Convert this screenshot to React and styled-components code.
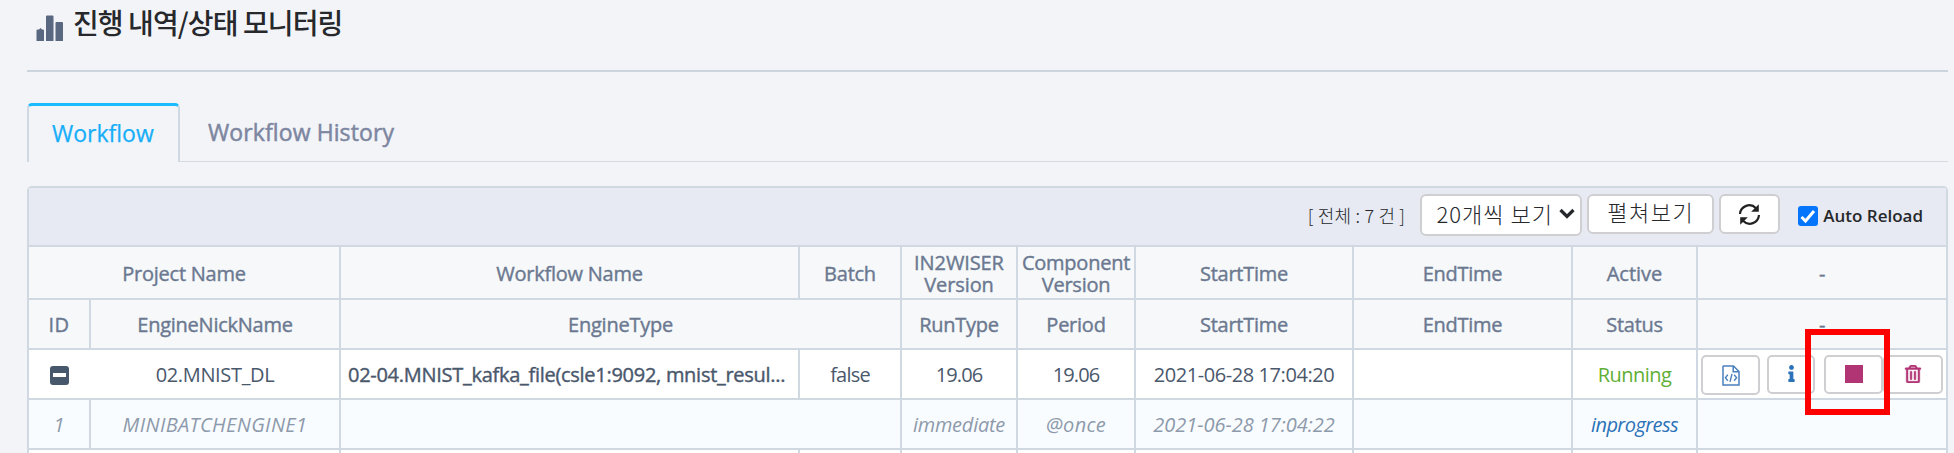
import React from "react";
import styled, { createGlobalStyle, css } from "styled-components";
import { FaInfo, FaRegTrashAlt } from "react-icons/fa";

const LINE = "#d0d8e1";

const GlobalStyle = createGlobalStyle`
  * { box-sizing: border-box; }
  body {
    margin: 0;
    background: #f2f4f8;
    font-family: "Open Sans", "Noto Sans CJK KR", sans-serif;
    overflow: hidden;
  }
`;

const Page = styled.main`
  width: 1954px;
  height: 453px;
  padding: 0 6px 0 27px;
  overflow: hidden;
`;

const PageHeader = styled.header`
  display: flex;
  align-items: flex-start;
  height: 72px;
  padding-left: 9px;
  border-bottom: 2px solid #ccd5de;
`;

const ChartIcon = styled.svg`
  width: 28px;
  height: 27px;
  margin-top: 14px;
  fill: #5a6780;
`;

const Title = styled.h1`
  margin: 2px 0 0 9px;
  font-size: 28px;
  font-weight: 500;
  line-height: 40px;
  letter-spacing: -0.9px;
  color: #26282c;
  font-family: "Noto Sans CJK KR", sans-serif;
  white-space: nowrap;
`;

const Tabs = styled.nav`
  display: flex;
  height: 60px;
  margin-top: 30px;
  padding-top: 1px;
  box-shadow: inset 0 -1px 0 #d6dbe1;
`;

const Tab = styled.a`
  height: 59px;
  padding: 0 24px 0 28px;
  font-size: 23px;
  line-height: 59px;
  font-weight: 500;
  white-space: nowrap;
  color: #7d86a0;
  letter-spacing: 0.1px;
  -webkit-text-stroke: 0.5px currentColor;
  ${(p) =>
    p.$active &&
    css`
      width: 153px;
      padding: 0 0 0 23px;
      border: 1px solid ${LINE};
      border-width: 3px 2px 0 2px;
      border-top-color: #1cbbff;
      border-radius: 5px 5px 0 0;
      background: #f2f4f8;
      color: #17aef8;
      letter-spacing: 0;
      line-height: 55px;
      -webkit-text-stroke: 0.25px currentColor;
    `}
`;

const Panel = styled.section`
  width: 1921px;
  height: 300px;
  margin-top: 24px;
  border: 2px solid ${LINE};
  border-bottom: 0;
  border-radius: 5px 5px 0 0;
  background: #fff;
`;

const Toolbar = styled.div`
  display: flex;
  align-items: flex-start;
  justify-content: flex-end;
  height: 59px;
  padding: 6px 23px 0 0;
  border-bottom: 2px solid ${LINE};
  background: #e7eaf2;
  color: #26282c;
`;

const Count = styled.span`
  margin: 8px 15px 0 0;
  font-size: 18px;
  line-height: 26px;
  letter-spacing: 0.2px;
  white-space: pre;
  font-family: "Noto Sans CJK KR", sans-serif;
  font-weight: 300;
`;

const Control = styled.button`
  display: flex;
  align-items: center;
  justify-content: center;
  width: ${(p) => p.$w}px;
  height: ${(p) => p.$h || 40}px;
  margin: 0 5px 0 0;
  padding: 0 0 ${(p) => p.$lift || 0}px ${(p) => p.$indent || 0}px;
  border: 2px solid #cfcfd2;
  border-radius: 6px;
  background: #fff;
  color: #26282c;
  font: 300 22px/30px "Noto Sans CJK KR", sans-serif;
  letter-spacing: ${(p) => p.$ls || 0}px;
  white-space: nowrap;

  svg {
    flex: none;
    margin-left: ${(p) => p.$gap || 0}px;
  }
`;

const AutoReload = styled.label`
  display: flex;
  align-items: center;
  margin: 12px 0 0 13px;
  height: 20px;
  font-size: 17px;
  line-height: 20px;
  font-weight: 600;
  white-space: nowrap;
`;

const Check = styled.span`
  display: flex;
  align-items: center;
  justify-content: center;
  width: 20px;
  height: 20px;
  margin-right: 5px;
  border-radius: 3px;
  background: #0575fb;
`;

const Row = styled.div`
  display: grid;
  grid-template-columns: 62px 250px 459px 102px 116px 118px 218px 219px 125px 248px;
  height: ${(p) => p.$h || 50}px;
  font-size: 20px;
  line-height: 22px;
  font-weight: 400;
  color: #4a586c;
  ${(p) =>
    p.$kind === "head" &&
    css`
      background: #f6f8fa;
      color: #6b7890;
      font-weight: 500;
      -webkit-text-stroke: 0.4px currentColor;
    `}
  ${(p) =>
    p.$kind === "engine" &&
    css`
      background: #f9fcff;
      color: #8d9aab;
      font-style: italic;
    `}
`;

const Cell = styled.div`
  display: flex;
  align-items: center;
  justify-content: center;
  grid-column: span ${(p) => p.$span || 1};
  min-width: 0;
  padding-top: 2px;
  border-right: ${(p) => (p.$open ? 0 : 2)}px solid ${LINE};
  border-bottom: 2px solid ${LINE};
  text-align: center;
  white-space: pre;
  letter-spacing: ${(p) => p.$ls ?? -0.25}px;
  color: ${(p) => p.$color || "inherit"};

  &:last-child {
    border-right: 0;
  }
`;

const NameCell = styled(Cell)`
  justify-content: flex-start;
  padding-left: 7px;
  font-weight: 500;
  letter-spacing: -0.28px;
  -webkit-text-stroke: 0.4px currentColor;
`;

const ActionCell = styled(Cell)`
  position: relative;
  align-items: flex-start;
  justify-content: flex-start;
  padding: 5px 0 0 3px;
`;

const Action = styled.button`
  display: flex;
  justify-content: center;
  align-items: flex-start;
  flex: none;
  width: ${(p) => p.$w}px;
  height: ${(p) => p.$h || 39}px;
  margin: 0 ${(p) => p.$mr || 0}px 0 0;
  padding: 8px 0 0;
  border: 2px solid #cfcfd2;
  border-radius: 5px;
  background: #fff;
  color: ${(p) => p.$color};
`;

const StopGlyph = styled.span`
  width: 18px;
  height: 18px;
  background: #b13474;
`;

const Collapse = styled.span`
  display: flex;
  align-items: center;
  justify-content: center;
  width: 19px;
  height: 19px;
  margin-right: 2px;
  border-radius: 3px;
  background: #47586c;

  &::after {
    content: "";
    width: 13px;
    height: 4px;
    background: #fff;
  }
`;

const Highlight = styled.span`
  position: absolute;
  left: 107px;
  top: -21px;
  width: 85px;
  height: 86px;
  border: 6px solid #fe0000;
`;

function RefreshIcon() {
  return (
    <svg width="23" height="23" viewBox="0 0 23 23" fill="none" stroke="#222" strokeWidth="2.2">
      <path d="M2 11A9.300 9.300 0 0 1 18 5.200M21 12A9.300 9.300 0 0 1 5 17.800" />
      <path d="M20.800 1.200v7.600h-7.600zM2.200 21.800v-7.600h7.600z" fill="#222" stroke="none" />
    </svg>
  );
}

function FileCodeIcon() {
  return (
    <svg width="18" height="21" viewBox="0 0 18 21" fill="none" stroke="currentColor" strokeWidth="1.5">
      <path d="M1.500 1h10l5.500 5.500V20h-16V1.500zM11.200 1v5.800H17" />
      <path d="M5.800 9.800L3.400 12.800l2.400 3M12.200 9.800l2.400 3-2.400 3M10 8.800l-2 8" strokeWidth="1.400" />
    </svg>
  );
}

export default function App() {
  return (
    <>
      <GlobalStyle />
      <Page>
        <PageHeader>
          <ChartIcon viewBox="0 0 28 27">
            <path d="M0.5 16.5q0-1 1-1h1.500l1.500-1.500 1.500 1.500h1q1 0 1 1V27H.5zM10 2.500q0-1 1-1h5.500q1 0 1 1V27H10zM19.500 9q0-1 1-1h5.500q1 0 1 1v18h-7.500z" />
          </ChartIcon>
          <Title>진행 내역/상태 모니터링</Title>
        </PageHeader>

        <Tabs>
          <Tab $active>Workflow</Tab>
          <Tab>Workflow History</Tab>
        </Tabs>

        <Panel>
          <Toolbar>
            <Count>[ 전체 : 7 건 ]</Count>
            <Control $w={162} $h={42} $ls={1} $gap={6} $indent={9} $lift={4}>
              20개씩 보기
              <svg width="16" height="11" viewBox="0 0 16 11" fill="none" stroke="#26282c" strokeWidth="3.200">
                <path d="M1.500 2l6.500 6.500L14.500 2" />
              </svg>
            </Control>
            <Control $w={127} $ls={1.5} $lift={6}>펼쳐보기</Control>
            <Control $w={61}>
              <RefreshIcon />
            </Control>
            <AutoReload>
              <Check>
                <svg width="16" height="15" viewBox="0 0 16 15" fill="none" stroke="#fff" strokeWidth="3">
                  <path d="M1.500 8l4 4L14 2" />
                </svg>
              </Check>
              Auto Reload
            </AutoReload>
          </Toolbar>

          <Row $kind="head" $h={53}>
            <Cell $span={2}>Project Name</Cell>
            <Cell>Workflow Name</Cell>
            <Cell>Batch</Cell>
            <Cell $ls={-0.1}>{"IN2WISER\nVersion"}</Cell>
            <Cell>{"Component\nVersion"}</Cell>
            <Cell>StartTime</Cell>
            <Cell>EndTime</Cell>
            <Cell $ls={0}>Active</Cell>
            <Cell>-</Cell>
          </Row>
          <Row $kind="head">
            <Cell $ls={0.4}>ID</Cell>
            <Cell>EngineNickName</Cell>
            <Cell $span={2}>EngineType</Cell>
            <Cell>RunType</Cell>
            <Cell>Period</Cell>
            <Cell>StartTime</Cell>
            <Cell>EndTime</Cell>
            <Cell>Status</Cell>
            <Cell>-</Cell>
          </Row>
          <Row>
            <Cell $open>
              <Collapse />
            </Cell>
            <Cell $ls={-0.35}>02.MNIST_DL</Cell>
            <NameCell>02-04.MNIST_kafka_file(csle1:9092, mnist_resul...</NameCell>
            <Cell $ls={-0.8}>false</Cell>
            <Cell $ls={-0.9}>19.06</Cell>
            <Cell $ls={-0.9}>19.06</Cell>
            <Cell $ls={-0.43}>2021-06-28 17:04:20</Cell>
            <Cell />
            <Cell $ls={-0.55} $color="#5fae35">Running</Cell>
            <ActionCell>
              <Action $w={59} $h={40} $mr={7} $color="#4a80bd">
                <FileCodeIcon />
              </Action>
              <Action $w={48} $mr={9} $color="#2b72b8">
                <FaInfo size={17} />
              </Action>
              <Action $w={59}>
                <StopGlyph />
              </Action>
              <Action $w={60} $color="#b13474">
                <FaRegTrashAlt size={18} stroke="currentColor" strokeWidth={14} />
              </Action>
              <Highlight />
            </ActionCell>
          </Row>
          <Row $kind="engine">
            <Cell>1</Cell>
            <Cell $ls={0.36}>MINIBATCHENGINE1</Cell>
            <Cell $span={2} />
            <Cell>immediate</Cell>
            <Cell $ls={0.3}>@once</Cell>
            <Cell $ls={-0.03}>2021-06-28 17:04:22</Cell>
            <Cell />
            <Cell $ls={-0.57} $color="#2b72b8">inprogress</Cell>
            <Cell />
          </Row>
          <Row>
            <Cell $span={2} />
            <Cell />
            <Cell />
            <Cell />
            <Cell />
            <Cell />
            <Cell />
            <Cell />
            <Cell />
          </Row>
        </Panel>
      </Page>
    </>
  );
}
